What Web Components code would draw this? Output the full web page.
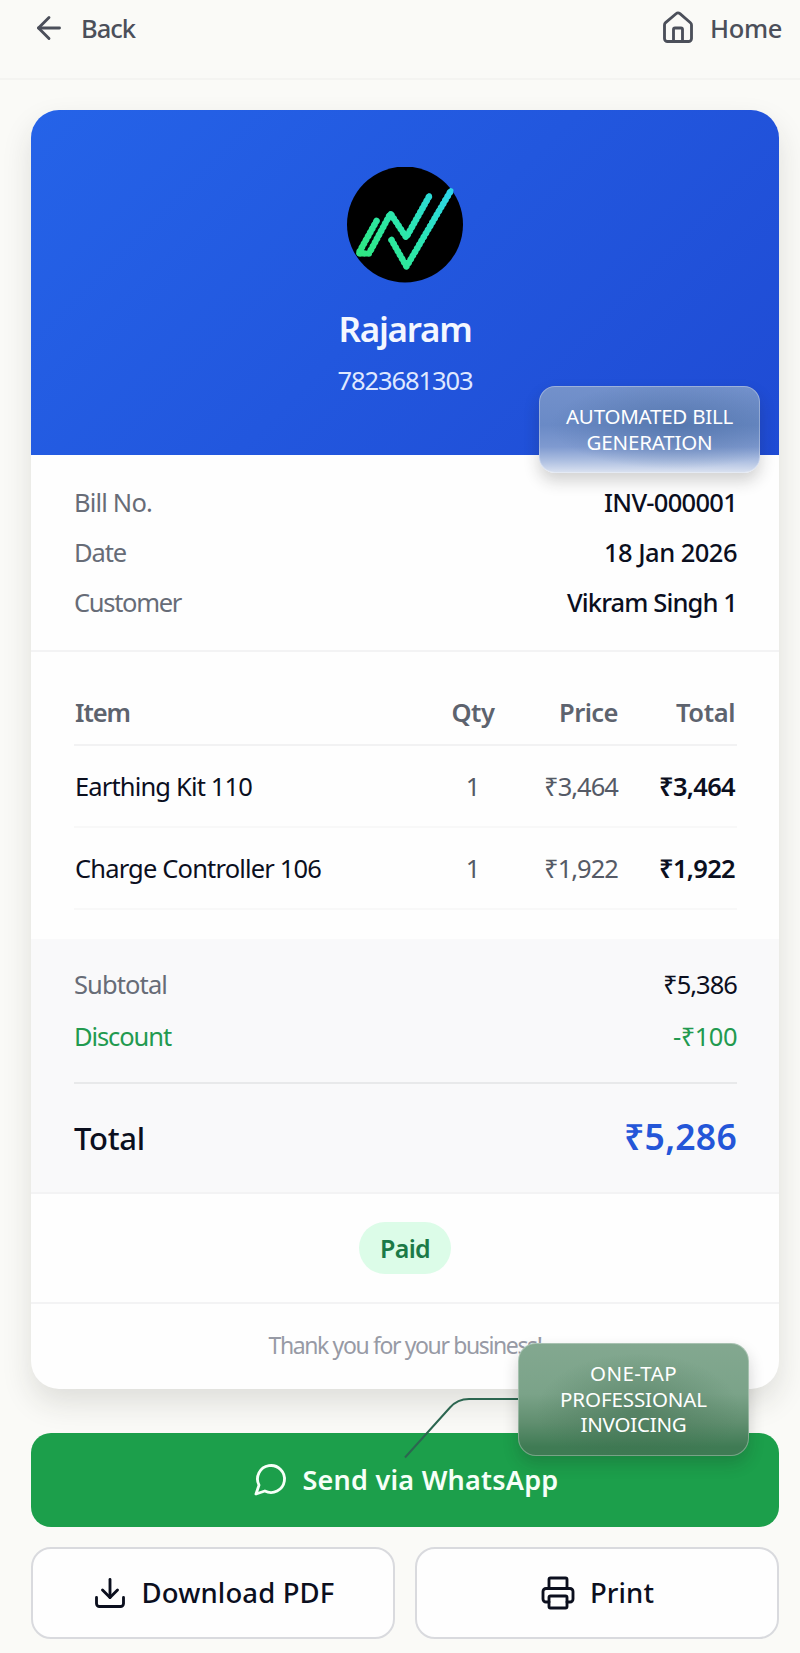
<!DOCTYPE html>
<html lang="en">
<head>
<meta charset="utf-8">
<title>Invoice INV-000001</title>
<style>
  * { box-sizing: border-box; }
  body {
    margin: 0;
    background: #fafaf7;
    font-family: "Noto Sans", "Open Sans", sans-serif;
    font-size: 25.5px;
    color: #0b0f1e;
  }
</style>
</head>
<body>
<invoice-page></invoice-page>

<script>
const ICONS = {
  back: '<path d="m12 19-7-7 7-7"/><path d="M19 12H5"/>',
  home: `<path d="M15 21v-8a1 1 0 0 0-1-1h-4a1 1 0 0 0-1 1v8"/>
    <path d="M3 10a2 2 0 0 1 .709-1.528l7-6a2 2 0 0 1 2.582 0l7 6A2 2 0 0 1 21 10v9a2 2 0 0 1-2 2H5a2 2 0 0 1-2-2z"/>`,
  chat: '<path d="M7.9 20A9 9 0 1 0 4 16.1L2 22Z"/>',
  download: `<path d="M21 15v4a2 2 0 0 1-2 2H5a2 2 0 0 1-2-2v-4"/>
    <path d="m7 10 5 5 5-5"/><path d="M12 15V3"/>`,
  print: `<path d="M6 18H4a2 2 0 0 1-2-2v-5a2 2 0 0 1 2-2h16a2 2 0 0 1 2 2v5a2 2 0 0 1-2 2h-2"/>
    <path d="M6 9V3a1 1 0 0 1 1-1h10a1 1 0 0 1 1 1v6"/>
    <rect x="6" y="14" width="12" height="8" rx="1"/>`,
};

class UiIcon extends HTMLElement {
  connectedCallback() {
    this.attachShadow({ mode: 'open' }).innerHTML = `
<style>
  :host { display: block; width: 36px; height: 36px; flex: none; }
  svg { display: block; width: 100%; height: 100%; }
</style>
<svg viewBox="0 0 24 24" fill="none" stroke="currentColor"
     stroke-width="1.9"
     stroke-linecap="round" stroke-linejoin="round">
  ${ICONS[this.getAttribute('name')]}
</svg>`;
  }
}

// tracks its text in or out until it is `w` pixels wide
class FitText extends HTMLElement {
  connectedCallback() {
    this.attachShadow({ mode: 'open' }).innerHTML = `
<style>
  :host { display: inline-block; white-space: nowrap; }
</style>
<slot></slot>`;
    const w = parseFloat(this.getAttribute('w'));
    const natural = this.getBoundingClientRect().width;
    const spacing = (w - natural) / this.textContent.length;
    this.style.letterSpacing = `${spacing.toFixed(3)}px`;
  }
}

class TopBar extends HTMLElement {
  connectedCallback() {
    this.attachShadow({ mode: 'open' }).innerHTML = `
<style>
  :host {
    display: flex;
    justify-content: space-between;
    align-items: flex-start;
    box-sizing: border-box;
    height: 80px;
    padding: 10px 18px 0 31px;
    border-bottom: 2px solid #f4f4f1;
    color: #4b4f5a;
    font-weight: 500;
  }
  nav { display: flex; align-items: center; height: 36px; gap: 14px; }
</style>
<nav><ui-icon name="back"></ui-icon><fit-text w="54">Back</fit-text></nav>
<nav><ui-icon name="home"></ui-icon><fit-text w="72">Home</fit-text></nav>`;
  }
}

class ShopHeader extends HTMLElement {
  connectedCallback() {
    this.attachShadow({ mode: 'open' }).innerHTML = `
<style>
  :host {
    display: flex;
    flex-direction: column;
    align-items: center;
    box-sizing: border-box;
    height: 345px;
    padding-top: 57px;
    color: #f4f7ff;
    background: linear-gradient(135deg, #2563e8 0%, #1f4bd4 100%);
  }
  svg { display: block; width: 116px; height: 116px; }
  h1 {
    margin: 21px 0 0;
    line-height: 50px;
    font-size: 35px;
    font-weight: 600;
  }
  p { margin: 0; line-height: 53px; color: #dfe8ff; }
</style>
<svg viewBox="0 0 116 116">
  <defs>
    <linearGradient id="g" gradientUnits="userSpaceOnUse" x1="12" y1="90" x2="104" y2="24">
      <stop offset="0" stop-color="#2fe77f"/>
      <stop offset=".5" stop-color="#2ce6b0"/>
      <stop offset="1" stop-color="#2cd5ea"/>
    </linearGradient>
    <g id="mark">
      <path d="M29.500 54 11.500 86.500H22L43.500 46.500 59.200 70.300 82.500 28.700"/>
      <path d="M44.500 73 59.500 99.500 104 23.500"/>
    </g>
  </defs>
  <circle cx="58" cy="57.500" r="58" fill="#000"/>
  <g fill="none" stroke="url(#g)" stroke-linecap="round" stroke-linejoin="round">
    <use href="#mark" stroke-width="4.8"/>
    <use href="#mark" stroke-width="6.6" stroke-dasharray=".1 4.2"/>
  </g>
</svg>
<h1><fit-text w="133">Rajaram</fit-text></h1>
<p><fit-text w="135">7823681303</fit-text></p>`;
  }
}

class BillRow extends HTMLElement {
  connectedCallback() {
    this.attachShadow({ mode: 'open' }).innerHTML = `
<style>
  :host {
    display: flex;
    justify-content: space-between;
    align-items: center;
    height: var(--row-height, 50px);
    line-height: 36px;
  }
  .label { color: var(--label-color, #676c77); }
  .value { font-weight: var(--value-weight, 500); }
</style>
<span class="label"><slot name="label"></slot></span>
<span class="value"><slot></slot></span>`;
  }
}

class ItemTable extends HTMLElement {
  connectedCallback() {
    this.attachShadow({ mode: 'open' }).innerHTML = `
<style>
  :host { display: block; padding: 28px 42px 29px 43px; }
  .row {
    display: grid;
    grid-template-columns: 1fr 60px 115px 117px;
    align-items: center;
    box-sizing: border-box;
    height: 82px;
    padding: 0 2px 0 1px;
    border-bottom: 2px solid #f8f8f8;
    line-height: 36px;
    text-align: right;
  }
  .row > :nth-child(1) { text-align: left; }
  .row > :nth-child(2) { text-align: center; }
  .row > :nth-child(2), .row > :nth-child(3) { color: #555a66; }
  .row > :nth-child(4) { font-weight: 600; }
  .head { height: 66px; border-color: #f2f2f3; }
  .row.head > * { color: #5d636e; font-weight: 600; }
</style>
<div class="row head">
  <span><fit-text w="55">Item</fit-text></span>
  <span><fit-text w="43">Qty</fit-text></span>
  <span><fit-text w="59">Price</fit-text></span>
  <span><fit-text w="59">Total</fit-text></span>
</div>
<div class="row">
  <span><fit-text w="177">Earthing Kit 110</fit-text></span>
  <span>1</span>
  <span><fit-text w="74">₹3,464</fit-text></span>
  <span><fit-text w="76">₹3,464</fit-text></span>
</div>
<div class="row">
  <span><fit-text w="246">Charge Controller 106</fit-text></span>
  <span>1</span>
  <span><fit-text w="74">₹1,922</fit-text></span>
  <span><fit-text w="76">₹1,922</fit-text></span>
</div>`;
  }
}

class BillCard extends HTMLElement {
  connectedCallback() {
    this.attachShadow({ mode: 'open' }).innerHTML = `
<style>
  :host {
    display: block;
    height: 1279px;
    border-radius: 28px;
    overflow: hidden;
    background: #fefefe;
    box-shadow: 0 14px 30px rgba(40,35,30,.13);
  }
  section { box-sizing: border-box; border-bottom: 2px solid #f3f3f4; }
  .meta { padding: 22px 42px 0 43px; height: 197px; }
  .sums { height: 255px; padding: 19px 42px 0 43px; background: #f9f9fa; }
  .sums bill-row { --row-height: 52px; --value-weight: 400; }
  .discount { color: #229a4f; --label-color: #229a4f; }
  .grand {
    display: flex;
    justify-content: space-between;
    align-items: center;
    height: 108px;
    margin-top: 20px;
    border-top: 2px solid #e8e9ea;
    font-size: 31px;
    font-weight: 500;
    line-height: 44px;
  }
  .grand strong {
    font-size: 35.5px;
    font-weight: 600;
    color: #2456d8;
    margin-top: -4px;
  }
  .status {
    display: flex;
    align-items: center;
    justify-content: center;
    height: 110px;
  }
  .pill {
    width: 92px;
    height: 52px;
    line-height: 52px;
    border-radius: 26px;
    text-align: center;
    background: #dcfce8;
    color: #1b7a47;
    font-weight: 600;
    font-size: 25px;
  }
  .thanks {
    line-height: 83px;
    text-align: center;
    font-size: 23px;
    color: #979aa5;
  }
</style>
<shop-header></shop-header>
<section class="meta">
  <bill-row><fit-text slot="label" w="78">Bill No.</fit-text><fit-text w="133">INV-000001</fit-text></bill-row>
  <bill-row><fit-text slot="label" w="52">Date</fit-text><fit-text w="133">18 Jan 2026</fit-text></bill-row>
  <bill-row><fit-text slot="label" w="107">Customer</fit-text><fit-text w="170">Vikram Singh 1</fit-text></bill-row>
</section>
<item-table></item-table>
<section class="sums">
  <bill-row><fit-text slot="label" w="93">Subtotal</fit-text><fit-text w="74">₹5,386</fit-text></bill-row>
  <bill-row class="discount"><fit-text slot="label" w="97">Discount</fit-text><fit-text w="64">-₹100</fit-text></bill-row>
  <div class="grand">
    <fit-text w="71">Total</fit-text>
    <strong><fit-text w="113">₹5,286</fit-text></strong>
  </div>
</section>
<section class="status"><div class="pill"><fit-text w="50">Paid</fit-text></div></section>
<div class="thanks"><fit-text w="273">Thank you for your business!</fit-text></div>`;
  }
}

class ActionButton extends HTMLElement {
  connectedCallback() {
    this.attachShadow({ mode: 'open' }).innerHTML = `
<style>
  :host {
    display: flex;
    align-items: center;
    justify-content: center;
    gap: 14px;
    box-sizing: border-box;
    height: 92px;
    padding-bottom: 1px;
    border: 2px solid #d9dade;
    border-radius: 20px;
    background: #fefefe;
    font-size: 27.5px;
    font-weight: 500;
  }
  :host([primary]) {
    height: 94px;
    padding: 0 0 2px 1px;
    border: 0;
    background: #1c9f4b;
    color: #f6fff8;
    font-weight: 600;
    font-size: 27px;
  }
</style>
<ui-icon name="${this.getAttribute('icon')}"></ui-icon>
<slot></slot>`;
  }
}

class GlassBadge extends HTMLElement {
  connectedCallback() {
    this.attachShadow({ mode: 'open' }).innerHTML = `
<style>
  :host {
    position: absolute;
    display: flex;
    flex-direction: column;
    align-items: center;
    justify-content: center;
    box-sizing: border-box;
    border: 1.5px solid rgba(255,255,255,.3);
    border-radius: 16px;
    background-origin: border-box;
    font-size: 20.5px;
    line-height: 25.5px;
    color: #fff;
    box-shadow: 0 8px 16px rgba(30,30,30,.2);
  }
</style>
<slot></slot>`;
  }
}

class InvoicePage extends HTMLElement {
  connectedCallback() {
    this.attachShadow({ mode: 'open' }).innerHTML = `
<style>
  :host { display: block; position: relative; height: 1653px; overflow: hidden; }
  main { padding: 30px 21px 0 31px; }
  .actions {
    display: grid;
    grid-template-columns: 1fr 1fr;
    gap: 20px;
    margin-top: 44px;
  }
  .actions [primary] { grid-column: 1 / 3; }
  .auto {
    left: 539px; top: 386px; width: 221px; height: 87px;
    background-image:
      radial-gradient(ellipse at 62% 45%, rgba(70,105,155,.55), transparent 65%),
      linear-gradient(180deg, #7391cb 0%, #6a8ac6 45%, #7f9ad0 70%, #adbfe1 86%, #dce3f1 100%);
  }
  .tap {
    left: 518px; top: 1343px; width: 231px; height: 113px;
    border-radius: 18px;
    background-image:
      radial-gradient(ellipse at 52% 60%, rgba(60,105,75,.45), transparent 60%),
      linear-gradient(180deg, #83a890 0%, #7ba389 45%, #618f70 70%, #3f7b54 92%, #3f7b54 100%);
  }
  .wire { position: absolute; left: 400px; top: 1394px; }
</style>
<top-bar></top-bar>
<main>
  <bill-card></bill-card>
  <div class="actions">
    <action-button primary icon="chat"><fit-text w="256">Send via WhatsApp</fit-text></action-button>
    <action-button icon="download"><fit-text w="193">Download PDF</fit-text></action-button>
    <action-button icon="print"><fit-text w="64">Print</fit-text></action-button>
  </div>
</main>
<svg class="wire" width="120" height="66" fill="none" stroke="#2c6650" stroke-width="2">
  <path d="M5 63.500 50 13.500Q57.500 5 69 5H118"/>
</svg>
<glass-badge class="auto">
  <fit-text w="167">AUTOMATED BILL</fit-text>
  <fit-text w="126">GENERATION</fit-text>
</glass-badge>
<glass-badge class="tap">
  <fit-text w="87">ONE-TAP</fit-text>
  <fit-text w="147">PROFESSIONAL</fit-text>
  <fit-text w="106">INVOICING</fit-text>
</glass-badge>`;
  }
}

customElements.define('invoice-page', InvoicePage);
customElements.define('top-bar', TopBar);
customElements.define('bill-card', BillCard);
customElements.define('shop-header', ShopHeader);
customElements.define('bill-row', BillRow);
customElements.define('item-table', ItemTable);
customElements.define('action-button', ActionButton);
customElements.define('glass-badge', GlassBadge);
customElements.define('ui-icon', UiIcon);
// last, so every text is already in place when it gets measured
customElements.define('fit-text', FitText);
</script>
</body>
</html>
